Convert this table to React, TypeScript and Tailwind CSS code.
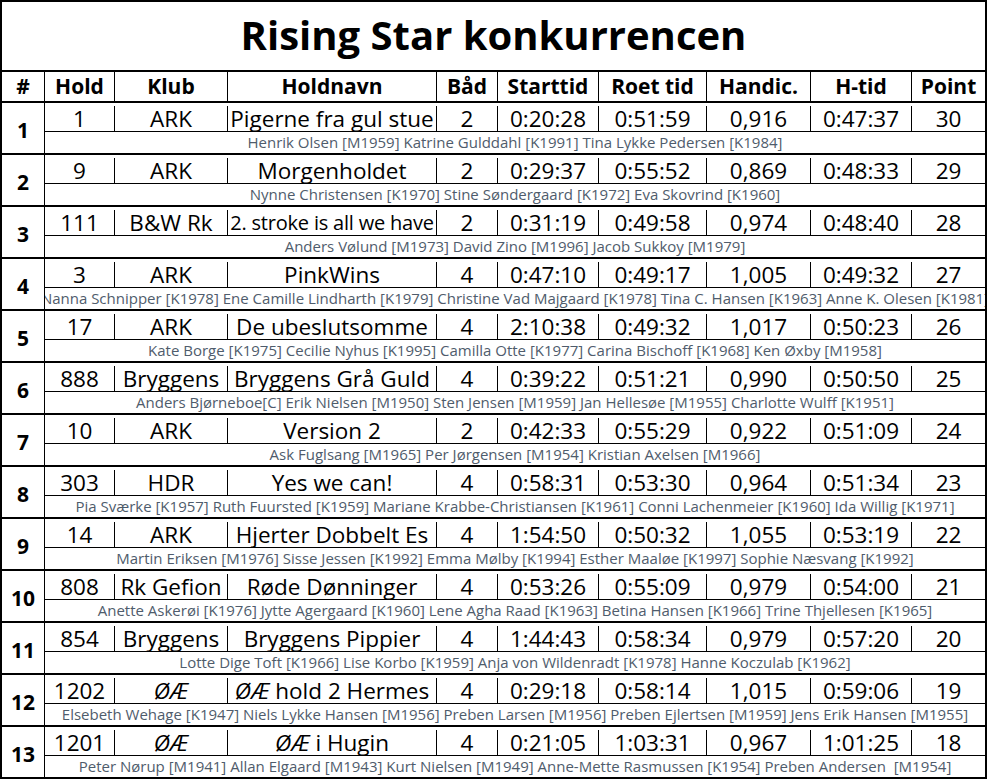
import React from "react";

type Row = {
  n: number;
  hold: string;
  klub: React.ReactNode;
  navn: React.ReactNode;
  navnCls?: string;
  baad: string;
  start: string;
  roet: string;
  hc: string;
  ht: string;
  pt: string;
  crew: string;
};

const OE = <span className="italic">ØÆ</span>;

const rows: Row[] = [
  { n: 1, hold: "1", klub: "ARK", navn: "Pigerne fra gul stue", baad: "2", start: "0:20:28", roet: "0:51:59", hc: "0,916", ht: "0:47:37", pt: "30", crew: "Henrik Olsen [M1959] Katrine Gulddahl [K1991] Tina Lykke Pedersen [K1984]" },
  { n: 2, hold: "9", klub: "ARK", navn: "Morgenholdet", baad: "2", start: "0:29:37", roet: "0:55:52", hc: "0,869", ht: "0:48:33", pt: "29", crew: "Nynne Christensen [K1970] Stine Søndergaard [K1972] Eva Skovrind [K1960]" },
  { n: 3, hold: "111", klub: "B&W Rk", navn: "2. stroke is all we have", navnCls: "text-[20px] tracking-[-0.2px]", baad: "2", start: "0:31:19", roet: "0:49:58", hc: "0,974", ht: "0:48:40", pt: "28", crew: "Anders Vølund [M1973] David Zino [M1996] Jacob Sukkoy [M1979]" },
  { n: 4, hold: "3", klub: "ARK", navn: "PinkWins", baad: "4", start: "0:47:10", roet: "0:49:17", hc: "1,005", ht: "0:49:32", pt: "27", crew: "Nanna Schnipper [K1978] Ene Camille Lindharth [K1979] Christine Vad Majgaard [K1978] Tina C. Hansen [K1963] Anne K. Olesen [K1981]" },
  { n: 5, hold: "17", klub: "ARK", navn: "De ubeslutsomme", baad: "4", start: "2:10:38", roet: "0:49:32", hc: "1,017", ht: "0:50:23", pt: "26", crew: "Kate Borge [K1975] Cecilie Nyhus [K1995] Camilla Otte [K1977] Carina Bischoff [K1968] Ken Øxby [M1958]" },
  { n: 6, hold: "888", klub: "Bryggens", navn: "Bryggens Grå Guld", baad: "4", start: "0:39:22", roet: "0:51:21", hc: "0,990", ht: "0:50:50", pt: "25", crew: "Anders Bjørneboe[C] Erik Nielsen [M1950] Sten Jensen [M1959] Jan Hellesøe [M1955] Charlotte Wulff [K1951]" },
  { n: 7, hold: "10", klub: "ARK", navn: "Version 2", baad: "2", start: "0:42:33", roet: "0:55:29", hc: "0,922", ht: "0:51:09", pt: "24", crew: "Ask Fuglsang [M1965] Per Jørgensen [M1954] Kristian Axelsen [M1966]" },
  { n: 8, hold: "303", klub: "HDR", navn: "Yes we can!", baad: "4", start: "0:58:31", roet: "0:53:30", hc: "0,964", ht: "0:51:34", pt: "23", crew: "Pia Sværke [K1957] Ruth Fuursted [K1959] Mariane Krabbe-Christiansen [K1961] Conni Lachenmeier [K1960] Ida Willig [K1971]" },
  { n: 9, hold: "14", klub: "ARK", navn: "Hjerter Dobbelt Es", baad: "4", start: "1:54:50", roet: "0:50:32", hc: "1,055", ht: "0:53:19", pt: "22", crew: "Martin Eriksen [M1976] Sisse Jessen [K1992] Emma Mølby [K1994] Esther Maaløe [K1997] Sophie Næsvang [K1992]" },
  { n: 10, hold: "808", klub: "Rk Gefion", navn: "Røde Dønninger", baad: "4", start: "0:53:26", roet: "0:55:09", hc: "0,979", ht: "0:54:00", pt: "21", crew: "Anette Askerøi [K1976] Jytte Agergaard [K1960] Lene Agha Raad [K1963] Betina Hansen [K1966] Trine Thjellesen [K1965]" },
  { n: 11, hold: "854", klub: "Bryggens", navn: "Bryggens Pippier", baad: "4", start: "1:44:43", roet: "0:58:34", hc: "0,979", ht: "0:57:20", pt: "20", crew: "Lotte Dige Toft [K1966] Lise Korbo [K1959] Anja von Wildenradt [K1978] Hanne Koczulab [K1962]" },
  { n: 12, hold: "1202", klub: OE, navn: <>{OE} hold 2 Hermes</>, baad: "4", start: "0:29:18", roet: "0:58:14", hc: "1,015", ht: "0:59:06", pt: "19", crew: "Elsebeth Wehage [K1947] Niels Lykke Hansen [M1956] Preben Larsen [M1956] Preben Ejlertsen [M1959] Jens Erik Hansen [M1955]" },
  { n: 13, hold: "1201", klub: OE, navn: <>{OE} i Hugin</>, baad: "4", start: "0:21:05", roet: "1:03:31", hc: "0,967", ht: "1:01:25", pt: "18", crew: "Peter Nørup [M1941] Allan Elgaard [M1943] Kurt Nielsen [M1949] Anne-Mette Rasmussen [K1954] Preben Andersen  [M1954]" },
];

const font = { fontFamily: '"Open Sans", "Noto Sans", sans-serif' };

function Cell({ w, children, first, cls }: { w: string; children: React.ReactNode; first?: boolean; cls?: string }) {
  return (
    <div
      className={`${w} ${first ? "" : "border-l border-black"} flex items-center justify-center whitespace-pre`}
    >
      <span className={`shrink-0 ${cls ?? ""}`}>{children}</span>
    </div>
  );
}

export default function App() {
  return (
    <div className="bg-white w-[989px] h-[780px]" style={font}>
      <div className="w-[987px] border-2 border-black bg-white text-black">
        <div className="h-[70px] flex items-center justify-center border-b-2 border-black">
          <span className="text-[40px] font-bold leading-[56px] pb-[2px]">Rising Star konkurrencen</span>
        </div>
        <div className="h-[31px] flex border-b-2 border-black text-[21px] font-bold leading-[29px]">
          <Cell w="w-[42px]" first>#</Cell>
          <Cell w="w-[70px]">Hold</Cell>
          <Cell w="w-[113px]">Klub</Cell>
          <Cell w="w-[209px]">Holdnavn</Cell>
          <Cell w="w-[61px]">Båd</Cell>
          <Cell w="w-[101px]">Starttid</Cell>
          <Cell w="w-[108px]">Roet tid</Cell>
          <Cell w="w-[104px]">Handic.</Cell>
          <Cell w="w-[101px]">H-tid</Cell>
          <Cell w="w-[74px]">Point</Cell>
        </div>
        {rows.map((r, i) => (
          <div
            key={r.n}
            className={`flex ${i < rows.length - 1 ? "border-b-2 border-black" : ""}`}
          >
            <div className="w-[42px] flex items-center justify-center text-[21px] font-bold leading-[28px] pt-[3px]">
              {r.n}
            </div>
            <div className="w-[941px] border-l border-black flex flex-col">
              <div className="h-[29px] flex border-b border-black text-[22.5px] leading-[25px] pt-[3px]">
                <Cell w="w-[69px]" first>{r.hold}</Cell>
                <Cell w="w-[113px]">{r.klub}</Cell>
                <Cell w="w-[209px]" cls={r.navnCls}>{r.navn}</Cell>
                <Cell w="w-[61px]">{r.baad}</Cell>
                <Cell w="w-[101px]">{r.start}</Cell>
                <Cell w="w-[108px]">{r.roet}</Cell>
                <Cell w="w-[104px]">{r.hc}</Cell>
                <Cell w="w-[101px]">{r.ht}</Cell>
                <Cell w="w-[74px]">{r.pt}</Cell>
              </div>
              <div className="h-[21px] flex items-center justify-center overflow-x-clip whitespace-pre text-[15px] leading-[21px] text-[#4f5c6c]">
                <span className="shrink-0">{r.crew}</span>
              </div>
            </div>
          </div>
        ))}
      </div>
    </div>
  );
}
